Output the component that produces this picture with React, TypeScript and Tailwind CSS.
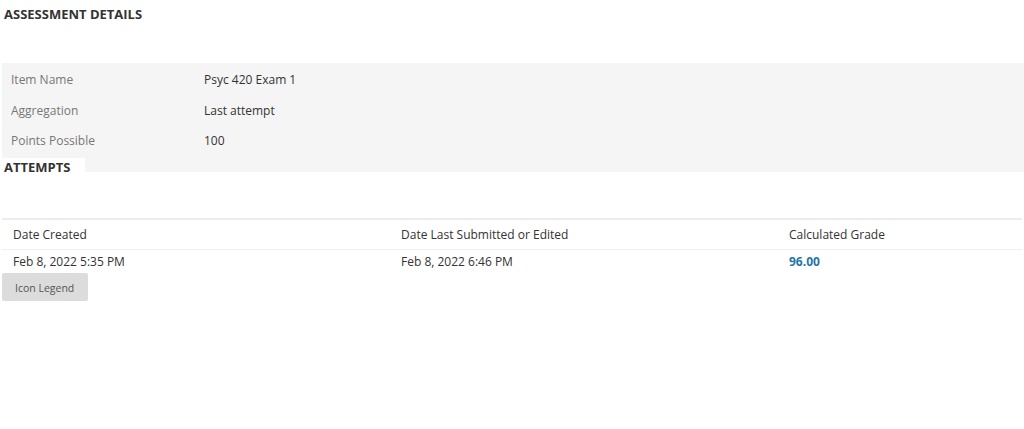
export default function App() {
  const details = [
    { label: "Item Name", value: "Psyc 420 Exam 1" },
    { label: "Aggregation", value: "Last attempt" },
    { label: "Points Possible", value: "100" },
  ];

  return (
    <div className="min-h-[429px] bg-white font-['Open_Sans',sans-serif] text-[12px] text-[#333]">
      <h2 className="pl-[4px] pt-[6px] text-[13px] font-bold leading-[16px] text-[#333]">
        ASSESSMENT DETAILS
      </h2>

      <div className="ml-[2px] mt-[41px] bg-[#f5f5f5] pt-[2px]">
        {details.map((d) => (
          <div key={d.label} className="flex h-[30.5px] items-center leading-[16px]">
            <span className="w-[202px] pl-[9px] text-[#777]">{d.label}</span>
            <span className="text-[#333]">{d.value}</span>
          </div>
        ))}
        <div className="-ml-[2px] mt-[1.5px] h-[14px] w-[85px] bg-white">
          <h2 className="pl-[4px] pt-[1px] text-[13px] font-bold leading-[16px] text-[#333]">
            ATTEMPTS
          </h2>
        </div>
      </div>

      <div className="ml-[2px] mt-[46px] w-[1020px] border-t-2 border-[#ececec]">
        <div className="grid h-[30px] grid-cols-[388px_388px_1fr] items-center border-b border-[#f0f0f0] leading-[16px]">
          <span className="pl-[11px]">Date Created</span>
          <span className="pl-[11px]">Date Last Submitted or Edited</span>
          <span className="pl-[11px]">Calculated Grade</span>
        </div>
        <div className="grid h-[23px] grid-cols-[388px_388px_1fr] items-start pt-[4px] leading-[16px]">
          <span className="pl-[11px]">Feb 8, 2022 5:35 PM</span>
          <span className="pl-[11px]">Feb 8, 2022 6:46 PM</span>
          <span className="pl-[11px] font-bold text-[#1f75aa]">96.00</span>
        </div>
      </div>

      <button className="ml-[2px] flex h-[28px] w-[86px] items-center rounded-[2px] bg-[#dcdcdc] pl-[13px] pt-[4px] text-[10.5px] text-[#555]">
        Icon Legend
      </button>
    </div>
  );
}
